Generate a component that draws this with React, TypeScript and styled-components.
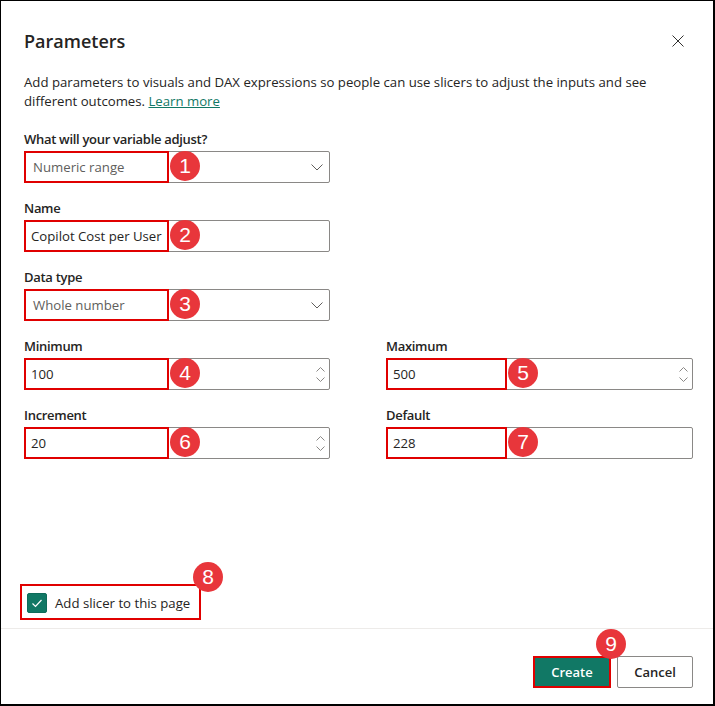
import React from "react";
import styled, { createGlobalStyle } from "styled-components";

const GlobalStyle = createGlobalStyle`
  html, body { margin: 0; padding: 0; background: #fff; }
  body { font-family: "Segoe UI", "Open Sans", sans-serif; color: #252423; }
  * { box-sizing: border-box; }
`;

const Frame = styled.div`
  width: 715px;
  height: 706px;
  border-style: solid;
  border-color: #000;
  border-width: 1px 2px 2px 1px;
  display: flex;
  flex-direction: column;
  background: #fff;
`;

const Body = styled.div`
  flex: 1;
  display: flex;
  flex-direction: column;
  padding: 26px 20px 8px 23px;
`;

const TitleRow = styled.div`
  display: flex;
  align-items: center;
  justify-content: space-between;
  height: 28px;
`;

const Title = styled.h1`
  margin: 0;
  font-size: 18px;
  font-weight: 600;
  line-height: 28px;
  color: #252423;
`;

const CloseButton = styled.button`
  width: 24px;
  height: 24px;
  margin-right: 3px;
  padding: 0;
  border: none;
  background: none;
  display: flex;
  align-items: center;
  justify-content: center;
  color: #323130;
`;

const Description = styled.p`
  margin: 18px 0 0;
  font-size: 13.2px;
  line-height: 19px;
  color: #252423;
`;

const Link = styled.a`
  color: #117865;
  text-decoration: underline;
`;

const FieldGrid = styled.div`
  display: grid;
  grid-template-columns: 306px 307px;
  column-gap: 56px;
  row-gap: 15px;
  margin-top: 18px;
`;

const Field = styled.div<{ $col: number }>`
  grid-column: ${(p) => p.$col};
  display: flex;
  flex-direction: column;
`;

const Label = styled.label`
  font-size: 13px;
  font-weight: 600;
  letter-spacing: -0.3px;
  line-height: 20px;
  margin-bottom: 2px;
  color: #252423;
`;

const InputBox = styled.div<{ $pad: number }>`
  position: relative;
  height: 32px;
  border: 1px solid #8a8886;
  border-radius: 2px;
  display: flex;
  align-items: center;
  padding: 0 8px 0 ${(p) => p.$pad}px;
  background: #fff;
`;

const Value = styled.span<{ $muted?: boolean }>`
  font-size: 13.2px;
  color: ${(p) => (p.$muted ? "#605e5c" : "#252423")};
  white-space: nowrap;
`;

const Trailing = styled.span<{ $right: number }>`
  margin-left: auto;
  margin-right: ${(p) => p.$right}px;
  display: flex;
  align-items: center;
`;

const Highlight = styled.span<{ $w: number }>`
  position: absolute;
  top: -1px;
  left: -1px;
  bottom: -1px;
  width: ${(p) => p.$w}px;
  border: 2px solid #e00000;
  pointer-events: none;
`;

const Badge = styled.span<{ $left: string; $top: string }>`
  position: absolute;
  left: ${(p) => p.$left};
  top: ${(p) => p.$top};
  width: 30px;
  height: 30px;
  border-radius: 50%;
  background: #e8363b;
  color: #fff;
  font-family: "Liberation Sans", Arial, sans-serif;
  font-size: 21px;
  line-height: 30px;
  text-align: center;
`;

const SlicerRow = styled.div`
  margin-top: auto;
  display: flex;
`;

const Annotated = styled.span`
  position: relative;
  display: inline-flex;
  align-items: center;
  border: 2px solid #e00000;
`;

const CheckWrap = styled(Annotated)`
  margin-left: -4px;
  padding: 7px 9px 5px 5px;
  gap: 8px;
`;

const CheckBox = styled.span`
  width: 20px;
  height: 20px;
  border-radius: 2px;
  background: #117865;
  border: 1px solid #0f6b5a;
  display: flex;
  align-items: center;
  justify-content: center;
`;

const CheckLabel = styled.span`
  font-size: 13.2px;
  line-height: 20px;
  color: #252423;
`;

const Footer = styled.div`
  display: flex;
  justify-content: flex-end;
  align-items: center;
  gap: 6px;
  border-top: 1px solid #edebe9;
  padding: 27px 20px 16px;
`;

const PrimaryButton = styled.button`
  width: 74px;
  height: 28px;
  border: none;
  padding: 0;
  background: #117865;
  color: #fff;
  font-family: inherit;
  font-size: 13px;
  font-weight: 600;
`;

const SecondaryButton = styled.button`
  width: 76px;
  height: 32px;
  border: 1px solid #8a8886;
  border-radius: 2px;
  background: #fff;
  color: #252423;
  padding: 0;
  font-family: inherit;
  font-size: 13px;
  font-weight: 600;
`;

const Chevron = () => (
  <svg width="12" height="7" viewBox="0 0 12 7">
    <polyline points="0.5,0.5 6,6 11.5,0.5" fill="none" stroke="#605e5c" strokeWidth="1" />
  </svg>
);

const Spinner = () => (
  <svg width="9" height="15" viewBox="0 0 9 15">
    <polyline points="0.5,4.5 4.5,0.5 8.5,4.5" fill="none" stroke="#8a8886" strokeWidth="1" />
    <polyline points="0.5,10.5 4.5,14.5 8.5,10.5" fill="none" stroke="#8a8886" strokeWidth="1" />
  </svg>
);

type FieldDef = {
  label: string;
  value: string;
  col: number;
  kind: "select" | "spin" | "text";
  muted?: boolean;
  mark: number;
  hw: number;
};

const fields: FieldDef[] = [
  { label: "What will your variable adjust?", value: "Numeric range", col: 1, kind: "select", muted: true, mark: 1, hw: 145 },
  { label: "Name", value: "Copilot Cost per User", col: 1, kind: "text", mark: 2, hw: 145 },
  { label: "Data type", value: "Whole number", col: 1, kind: "select", muted: true, mark: 3, hw: 145 },
  { label: "Minimum", value: "100", col: 1, kind: "spin", mark: 4, hw: 145 },
  { label: "Maximum", value: "500", col: 2, kind: "spin", mark: 5, hw: 121 },
  { label: "Increment", value: "20", col: 1, kind: "spin", mark: 6, hw: 145 },
  { label: "Default", value: "228", col: 2, kind: "text", mark: 7, hw: 121 },
];

export default function App() {
  return (
    <>
      <GlobalStyle />
      <Frame>
        <Body>
          <TitleRow>
            <Title>Parameters</Title>
            <CloseButton aria-label="Close">
              <svg width="12" height="12" viewBox="0 0 12 12">
                <path d="M0.5 0.5 L11.5 11.5 M11.5 0.5 L0.5 11.5" stroke="#323130" strokeWidth="1" />
              </svg>
            </CloseButton>
          </TitleRow>
          <Description>
            Add parameters to visuals and DAX expressions so people can use slicers to adjust the inputs and see
            <br />
            different outcomes. <Link href="#">Learn more</Link>
          </Description>
          <FieldGrid>
            {fields.map((f) => (
              <Field key={f.label} $col={f.col}>
                <Label>{f.label}</Label>
                <InputBox $pad={f.kind === "select" ? 8 : 6}>
                  <Value $muted={f.muted}>{f.value}</Value>
                  {f.kind === "select" && (
                    <Trailing $right={-2}>
                      <Chevron />
                    </Trailing>
                  )}
                  {f.kind === "spin" && (
                    <Trailing $right={-4}>
                      <Spinner />
                    </Trailing>
                  )}
                  <Highlight $w={f.hw} />
                  <Badge $left={`${f.hw}px`} $top="calc(50% - 16px)">
                    {f.mark}
                  </Badge>
                </InputBox>
              </Field>
            ))}
          </FieldGrid>
          <SlicerRow>
            <CheckWrap>
              <CheckBox>
                <svg width="12" height="12" viewBox="0 0 12 12">
                  <path d="M1.5 6.5 L4.5 9.5 L10.5 3" fill="none" stroke="#fff" strokeWidth="1.2" />
                </svg>
              </CheckBox>
              <CheckLabel>Add slicer to this page</CheckLabel>
              <Badge $left="171px" $top="-24px">8</Badge>
            </CheckWrap>
          </SlicerRow>
        </Body>
        <Footer>
          <Annotated>
            <PrimaryButton>Create</PrimaryButton>
            <Badge $left="61px" $top="-29px">9</Badge>
          </Annotated>
          <SecondaryButton>Cancel</SecondaryButton>
        </Footer>
      </Frame>
    </>
  );
}
